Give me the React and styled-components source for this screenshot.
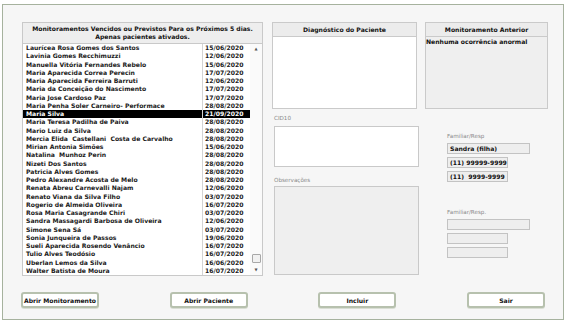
import React from "react";
import styled, { createGlobalStyle } from "styled-components";

const pacientes = [
    ["Laurícea Rosa Gomes dos Santos", "15/06/2020"],
    ["Lavinia Gomes Recchimuzzi", "12/06/2020"],
    ["Manuella Vitória Fernandes Rebelo", "15/06/2020"],
    ["Maria Aparecida Correa Perecin", "17/07/2020"],
    ["Maria Aparecida Ferreira Barruti", "12/06/2020"],
    ["Maria da Conceição do Nascimento", "17/07/2020"],
    ["Maria Jose Cardoso Paz", "17/07/2020"],
    ["Maria Penha Soler Carneiro- Performace", "28/08/2020"],
    ["Maria Silva", "21/09/2020"],
    ["Maria Teresa Padilha de Paiva", "28/08/2020"],
    ["Mario Luiz da Silva", "28/08/2020"],
    ["Mercia Elida  Castellani  Costa de Carvalho", "28/08/2020"],
    ["Mirian Antonia Simões", "15/06/2020"],
    ["Natalina  Munhoz Perin", "28/08/2020"],
    ["Nizeti Dos Santos", "28/08/2020"],
    ["Patricia Alves Gomes", "28/08/2020"],
    ["Pedro Alexandre Acosta de Melo", "28/08/2020"],
    ["Renata Abreu Carnevalli Najam", "12/06/2020"],
    ["Renato Viana da Silva Filho", "03/07/2020"],
    ["Rogerio de Almeida Oliveira", "16/07/2020"],
    ["Rosa Maria Casagrande Chiri", "03/07/2020"],
    ["Sandra Massagardi Barbosa de Oliveira", "12/06/2020"],
    ["Simone Sena Sá", "03/07/2020"],
    ["Sonia Junqueira de Passos", "19/06/2020"],
    ["Sueli Aparecida Rosendo Venâncio", "16/07/2020"],
    ["Tulio Alves Teodósio", "16/07/2020"],
    ["Uberlan Lemos da Silva", "16/06/2020"],
    ["Walter Batista de Moura", "16/07/2020"],
];

const GlobalStyle = createGlobalStyle`
    html, body {
        margin: 0;
        padding: 0;
        background: #ffffff;
        font-family: "DejaVu Sans", Verdana, sans-serif;
        color: #111;
    }
`;

// Janela principal
const Frame = styled.div`
    box-sizing: border-box;
    margin: 4px 0 0 2px;
    width: 562px;
    height: 316px;
    border: 1px solid #a6b29e;
    background: #f6f6f6;
    padding: 17px 0 0 19px;
    display: flex;
    flex-direction: column;
`;

const Top = styled.div`
    display: flex;
    align-items: flex-start;
`;

const ListBox = styled.div`
    box-sizing: border-box;
    width: 241px;
    height: 254px;
    border: 1px solid #c9c9c9;
    background: #fff;
    display: flex;
    flex-direction: column;
`;

const ListHeader = styled.div`
    height: 20px;
    background: #eeeeee;
    border-bottom: 1px solid #c9c9c9;
    display: flex;
    flex-direction: column;
    justify-content: center;
    text-align: center;
    font-weight: bold;
    font-size: 6.1px;
    line-height: 8px;
`;

const ListBody = styled.div`
    flex: 1;
    display: flex;
`;

const Rows = styled.div`
    flex: 1;
    display: flex;
    flex-direction: column;
`;

const Row = styled.div`
    display: grid;
    grid-template-columns: 1fr 48px;
    height: 8.25px;
    font-size: 6.1px;
    font-weight: bold;
    line-height: 8.25px;
    background: ${(p) => (p.$selected ? "#000" : "transparent")};
    color: ${(p) => (p.$selected ? "#fff" : "#1a1a1a")};
    span {
        padding-left: 3px;
        white-space: pre;
        overflow: hidden;
    }
    span + span {
        border-left: 1px solid #d4d4d4;
        padding-left: 2px;
    }
`;

const Scroll = styled.div`
    width: 12px;
    background: #fafafa;
    display: flex;
    flex-direction: column;
    justify-content: space-between;
    align-items: center;
    font-size: 4px;
    color: #555;
    padding: 2px 0 3px;
    box-sizing: border-box;
`;

const Thumb = styled.div`
    width: 7px;
    height: 7px;
    border: 1px solid #a8a8a8;
    border-radius: 1px;
    background: #f1f1f1;
    margin-top: auto;
    margin-bottom: 4px;
`;

const Right = styled.div`
    margin-left: 9px;
    display: flex;
    flex-direction: column;
`;

const PanelRow = styled.div`
    display: flex;
    gap: 8px;
`;

const Panel = styled.div`
    box-sizing: border-box;
    width: ${(p) => p.$w}px;
    height: 87px;
    border: 1px solid #cacaca;
    background: ${(p) => (p.$gray ? "#efefef" : "#fff")};
    display: flex;
    flex-direction: column;
`;

const PanelHeader = styled.div`
    height: 13px;
    background: #ececec;
    border-bottom: 1px solid #cacaca;
    text-align: center;
    font-weight: bold;
    font-size: 6.1px;
    line-height: 13px;
`;

const PanelText = styled.div`
    font-size: 6.1px;
    font-weight: bold;
    padding: 1px 0 0 0;
`;

const Lower = styled.div`
    display: flex;
    margin-left: 2px;
`;

const FieldCol = styled.div`
    display: flex;
    flex-direction: column;
    width: 145px;
`;

const Label = styled.div`
    font-size: 5.6px;
    color: #8a8a8a;
    margin: ${(p) => p.$m || "0"};
    height: 8px;
    line-height: 8px;
`;

const Area = styled.div`
    box-sizing: border-box;
    width: 145px;
    height: ${(p) => p.$h}px;
    border: 1px solid #c9c9c9;
    background: ${(p) => (p.$gray ? "#efefef" : "#fff")};
`;

const ContactCol = styled.div`
    margin-left: 28px;
    display: flex;
    flex-direction: column;
    gap: 3px;
`;

const Input = styled.div`
    box-sizing: border-box;
    width: ${(p) => p.$w}px;
    height: 11px;
    border: 1px solid #c3c3c3;
    background: #eeeeee;
    font-size: 6.1px;
    font-weight: bold;
    line-height: 9px;
    padding-left: 2px;
    white-space: pre;
`;

const ButtonRow = styled.div`
    margin: 16px 0 0 -1px;
    width: 524px;
    display: flex;
    justify-content: space-between;
`;

const Button = styled.button`
    box-sizing: border-box;
    width: 78px;
    height: 16px;
    border: 2px solid #b7c1ae;
    border-radius: 3px;
    background: #fff;
    font-family: "DejaVu Sans", Verdana, sans-serif;
    font-size: 6.1px;
    font-weight: bold;
    color: #111;
    padding: 0;
    box-shadow: 0 1px 0 #d9ded4;
`;

export default function App() {
    return (
        <>
            <GlobalStyle />
            <Frame>
                <Top>
                    <ListBox>
                        <ListHeader>
                            <div>Monitoramentos Vencidos ou Previstos Para os Próximos 5 dias.</div>
                            <div>Apenas pacientes ativados.</div>
                        </ListHeader>
                        <ListBody>
                            <Rows>
                                {pacientes.map(([nome, data]) => (
                                    <Row key={nome} $selected={nome === "Maria Silva"}>
                                        <span>{nome}</span>
                                        <span>{data}</span>
                                    </Row>
                                ))}
                            </Rows>
                            <Scroll>
                                <span>▲</span>
                                <Thumb />
                                <span>▼</span>
                            </Scroll>
                        </ListBody>
                    </ListBox>

                    <Right>
                        <PanelRow>
                            <Panel $w={145}>
                                <PanelHeader>Diagnóstico do Paciente</PanelHeader>
                            </Panel>
                            <Panel $w={123} $gray>
                                <PanelHeader>Monitoramento Anterior</PanelHeader>
                                <PanelText>Nenhuma ocorrência anormal</PanelText>
                            </Panel>
                        </PanelRow>

                        <Lower>
                            <FieldCol>
                                <Label $m="5px 0 4px">CID10</Label>
                                <Area $h={41} />
                                <Label $m="9px 0 2px">Observações</Label>
                                <Area $h={89} $gray />
                            </FieldCol>
                            <ContactCol>
                                <Label $m="23px 0 0">Familiar/Resp</Label>
                                <Input $w={83}>Sandra (filha)</Input>
                                <Input $w={61}>(11) 99999-9999</Input>
                                <Input $w={61}>(11)  9999-9999</Input>
                                <Label $m="23px 0 0">Familiar/Resp.</Label>
                                <Input $w={83} />
                                <Input $w={61} />
                                <Input $w={61} />
                            </ContactCol>
                        </Lower>
                    </Right>
                </Top>

                <ButtonRow>
                    <Button>Abrir Monitoramento</Button>
                    <Button>Abrir Paciente</Button>
                    <Button>Incluir</Button>
                    <Button>Sair</Button>
                </ButtonRow>
            </Frame>
        </>
    );
}
